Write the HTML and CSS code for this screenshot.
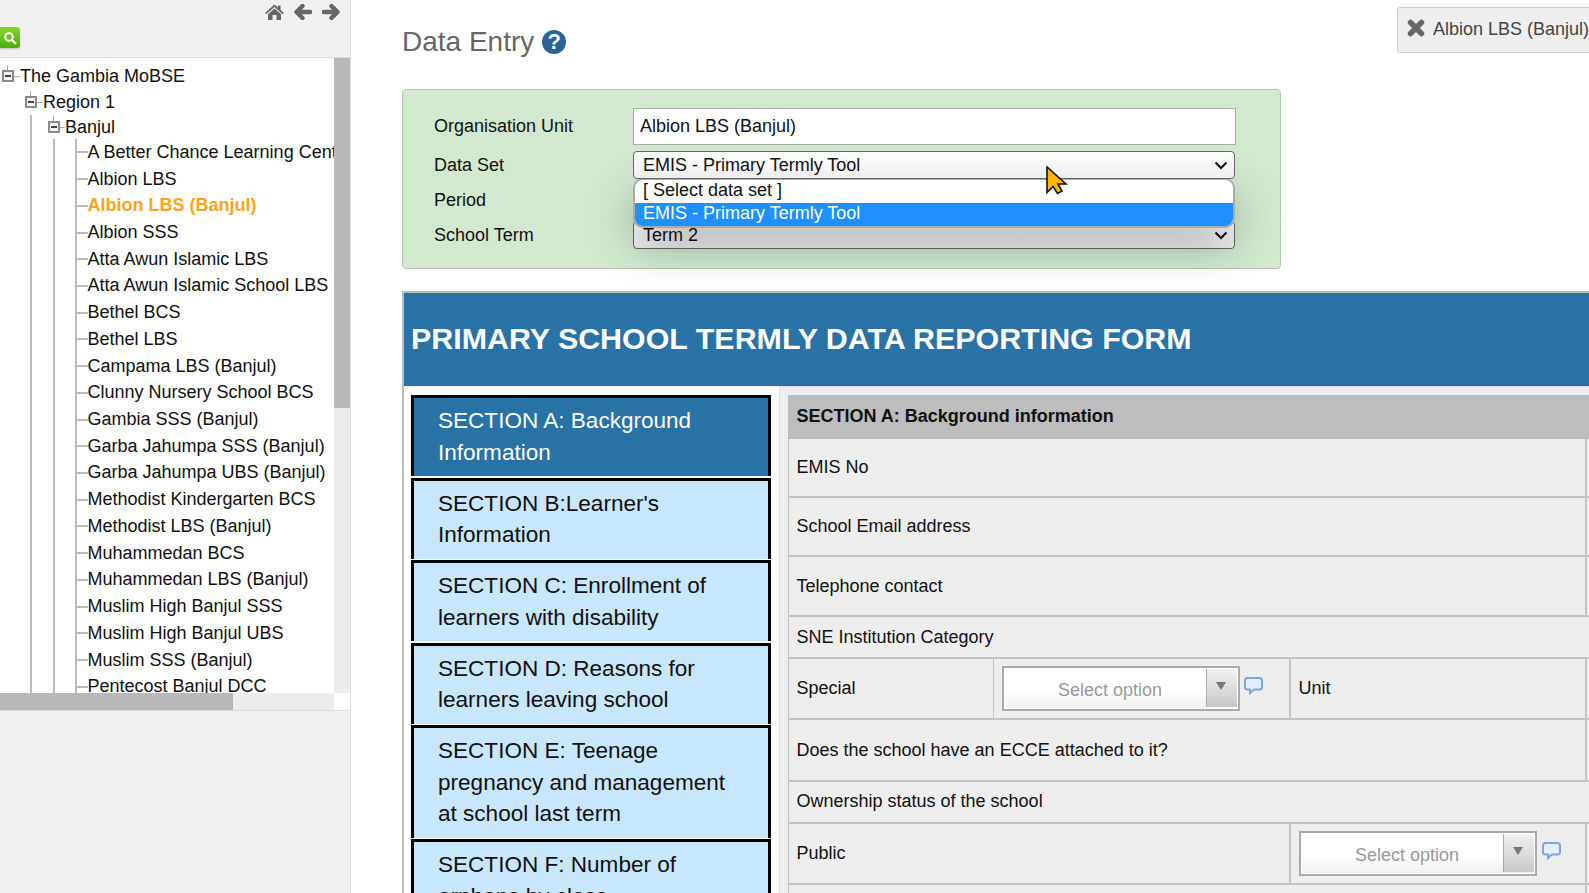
FILE: index.html
```html
<!DOCTYPE html>
<html lang="en">
  <head>
    <meta charset="UTF-8" />
    <title>Data Entry</title>
    <link rel="stylesheet" href="styles.css">
  </head>
  <body>
    <div class="sidebar">
      <div class="toolbar">
        <div class="toolbar-icons">
          <svg class="tool-icon" width="19" height="16" viewBox="0 0 19 16"><path d="M9.5 0.5 L13 3.6 V1.5 H15.5 V5.8 L19 9 L17.8 10.3 L9.5 3 L1.2 10.3 L0 9 Z"/><path d="M9.5 4.4 L16 10 V16 H11.5 V11 H7.5 V16 H3 V10 Z"/></svg>
          <svg class="tool-icon arrow" width="18" height="16" viewBox="0 0 18 16"><path d="M8.5 2 L2.5 8 L8.5 14 M3 8 H16"/></svg>
          <svg class="tool-icon arrow" width="18" height="16" viewBox="0 0 18 16"><path d="M9.5 2 L15.5 8 L9.5 14 M15 8 H2"/></svg>
        </div>
        <div class="search-btn">
          <svg width="14" height="14" viewBox="0 0 14 14"><circle cx="6" cy="6" r="3.8" fill="none" stroke="#fff" stroke-width="2"/><path d="M9 9 L13 13" stroke="#fff" stroke-width="2.4"/></svg>
        </div>
      </div>

      <div class="tree-box">
        <div class="tree">
          <div class="node node-root"><span class="toggle"></span><span class="tick"></span>The Gambia MoBSE</div>
          <div class="level-1">
            <div class="node node-region"><span class="toggle"></span><span class="tick"></span>Region 1</div>
            <div class="level-2">
              <div class="node node-district"><span class="toggle"></span><span class="tick"></span>Banjul</div>
              <div class="level-3">
                <ul class="leaves">
                  <li><span class="tick long"></span>A Better Chance Learning Centre</li>
                  <li><span class="tick long"></span>Albion LBS</li>
                  <li class="selected"><span class="tick long"></span>Albion LBS (Banjul)</li>
                  <li><span class="tick long"></span>Albion SSS</li>
                  <li><span class="tick long"></span>Atta Awun Islamic LBS</li>
                  <li><span class="tick long"></span>Atta Awun Islamic School LBS</li>
                  <li><span class="tick long"></span>Bethel BCS</li>
                  <li><span class="tick long"></span>Bethel LBS</li>
                  <li><span class="tick long"></span>Campama LBS (Banjul)</li>
                  <li><span class="tick long"></span>Clunny Nursery School BCS</li>
                  <li><span class="tick long"></span>Gambia SSS (Banjul)</li>
                  <li><span class="tick long"></span>Garba Jahumpa SSS (Banjul)</li>
                  <li><span class="tick long"></span>Garba Jahumpa UBS (Banjul)</li>
                  <li><span class="tick long"></span>Methodist Kindergarten BCS</li>
                  <li><span class="tick long"></span>Methodist LBS (Banjul)</li>
                  <li><span class="tick long"></span>Muhammedan BCS</li>
                  <li><span class="tick long"></span>Muhammedan LBS (Banjul)</li>
                  <li><span class="tick long"></span>Muslim High Banjul SSS</li>
                  <li><span class="tick long"></span>Muslim High Banjul UBS</li>
                  <li><span class="tick long"></span>Muslim SSS (Banjul)</li>
                  <li><span class="tick long"></span>Pentecost Banjul DCC</li>
                </ul>
              </div>
            </div>
          </div>
        </div>
        <div class="scroll-v"><div class="scroll-v-thumb"></div></div>
        <div class="scroll-h"><div class="scroll-h-thumb"></div></div>
        <div class="scroll-corner"></div>
      </div>
    </div>

    <div class="main">
      <div class="title-row">
        <h1>Data Entry <span class="help">?</span></h1>
        <div class="org-tag">
          <svg width="18" height="18" viewBox="0 0 18 18"><path d="M3.5 3.5 L14.5 14.5 M14.5 3.5 L3.5 14.5" stroke="#666" stroke-width="5.5" stroke-linecap="round"/></svg>
          <span class="org-tag-text">Albion LBS (Banjul)</span>
        </div>
      </div>

      <div class="criteria">
        <div class="criteria-row">
          <div class="criteria-label">Organisation Unit</div>
          <div class="org-input">Albion LBS (Banjul)</div>
        </div>
        <div class="criteria-row row-dataset">
          <div class="criteria-label">Data Set</div>
          <div class="picker picker-top">
            EMIS - Primary Termly Tool
            <svg class="chevron" width="14" height="9" viewBox="0 0 14 9"><path d="M1.5 1.5 L7 7 L12.5 1.5"/></svg>
          </div>
          <div class="popup">
            <div class="popup-item">[ Select data set ]</div>
            <div class="popup-item active">EMIS - Primary Termly Tool</div>
          </div>
        </div>
        <div class="criteria-row row-period">
          <div class="criteria-label">Period</div>
          <div class="picker"></div>
        </div>
        <div class="criteria-row">
          <div class="criteria-label">School Term</div>
          <div class="picker">
            Term 2
            <svg class="chevron" width="14" height="9" viewBox="0 0 14 9"><path d="M1.5 1.5 L7 7 L12.5 1.5"/></svg>
          </div>
        </div>
      </div>

      <div class="form">
        <div class="form-head">PRIMARY SCHOOL TERMLY DATA REPORTING FORM</div>
        <div class="form-body">
          <div class="sections">
            <div class="section active">SECTION A: Background Information</div>
            <div class="section">SECTION B:Learner's Information</div>
            <div class="section">SECTION C: Enrollment of learners with disability</div>
            <div class="section">SECTION D: Reasons for learners leaving school</div>
            <div class="section">SECTION E: Teenage pregnancy and management at school last term</div>
            <div class="section">SECTION F: Number of orphans by class</div>
          </div>
          <div class="sheet">
            <div class="sheet-title">SECTION A: Background information</div>
            <div class="sheet-row h59"><div class="cell span-3 edge">EMIS No</div></div>
            <div class="sheet-row h59"><div class="cell span-3 edge">School Email address</div></div>
            <div class="sheet-row h60"><div class="cell span-3 edge">Telephone contact</div></div>
            <div class="sheet-row h42"><div class="cell span-3">SNE Institution Category</div></div>
            <div class="sheet-row h61">
              <div class="cell col-a">Special</div>
              <div class="cell col-b">
                <div class="combo"><span class="combo-text">Select option</span><span class="combo-btn"><span class="combo-arrow"></span></span></div>
                <svg class="comment" width="19" height="18" viewBox="0 0 19 18"><path d="M3.5 1 H15.5 Q18 1 18 3.5 V10 Q18 12.5 15.5 12.5 H10 L6 16 V12.5 H3.5 Q1 12.5 1 10 V3.5 Q1 1 3.5 1 Z"/></svg>
              </div>
              <div class="cell col-c edge">Unit</div>
            </div>
            <div class="sheet-row h62"><div class="cell span-3 edge">Does the school have an ECCE attached to it?</div></div>
            <div class="sheet-row h42"><div class="cell span-3 tight">Ownership status of the school</div></div>
            <div class="sheet-row h61">
              <div class="cell col-ab">Public</div>
              <div class="cell col-c edge combo-cell">
                <div class="combo"><span class="combo-text">Select option</span><span class="combo-btn"><span class="combo-arrow"></span></span></div>
                <svg class="comment" width="19" height="18" viewBox="0 0 19 18"><path d="M3.5 1 H15.5 Q18 1 18 3.5 V10 Q18 12.5 15.5 12.5 H10 L6 16 V12.5 H3.5 Q1 12.5 1 10 V3.5 Q1 1 3.5 1 Z"/></svg>
              </div>
            </div>
            <div class="sheet-row h42"><div class="cell span-3 edge"></div></div>
          </div>
        </div>
      </div>
    </div>

    <svg class="cursor" width="22" height="29" viewBox="0 0 22 29"><path d="M1 1 V26.5 L7 20.5 L11.5 27.5 L16 25 L12 18 H20 Z"/></svg>
  </body>
</html>
```

FILE: styles.css
```css
* {
  box-sizing: border-box;
}

html,
body {
  margin: 0;
  height: 893px;
  overflow: hidden;
}

body {
  display: flex;
  font-family: "Liberation Sans", Arial, sans-serif;
  font-size: 18px;
  color: #111;
  background-color: #fff;
}

/* left tree panel */
.sidebar {
  flex: none;
  width: 351px;
  height: 893px;
  background-color: #f1f1f1;
  border-right: 1px solid #ddd;
}

.toolbar {
  height: 58px;
  border-bottom: 1px solid #ddd;
}

.toolbar-icons {
  display: flex;
  justify-content: flex-end;
  align-items: center;
  gap: 10px;
  height: 27px;
  padding-right: 10px;
  padding-bottom: 3px;
}

.tool-icon {
  fill: #666;
}

.tool-icon.arrow {
  fill: none;
  stroke: #666;
  stroke-width: 4.4;
  stroke-linecap: round;
  stroke-linejoin: round;
}

.search-btn {
  display: flex;
  align-items: center;
  justify-content: center;
  width: 20px;
  height: 21px;
  background: linear-gradient(#8ad62c, #4cae0c);
  border-radius: 0 3px 3px 0;
  box-shadow: 0 1px 2px rgba(0, 0, 0, 0.2);
}

.tree-box {
  display: grid;
  grid-template-columns: 334px 16px;
  grid-template-rows: 635px 17px;
  border-bottom: 1px solid #ddd;
}

.tree {
  padding-top: 5px;
  overflow: hidden;
  background-color: #fff;
  white-space: nowrap;
  line-height: 25px;
}

.node {
  display: flex;
  align-items: center;
}

.node-root {
  height: 26px;
  padding-left: 2px;
}

.node-region {
  height: 26px;
}

.node-district {
  height: 24px;
}

.node-district .tick {
  width: 5px;
}

.toggle {
  position: relative;
  flex: none;
  width: 12px;
  height: 12px;
  border: 2px solid #8a8a8a;
  background-color: #f2f2f2;
}

.toggle::before {
  content: "";
  position: absolute;
  left: 1px;
  top: 3px;
  width: 6px;
  height: 2px;
  background-color: #444;
}

.toggle::after {
  content: "";
  position: absolute;
  left: 3px;
  top: -7px;
  width: 1px;
  height: 5px;
  background-color: #aaa;
}

.tick {
  flex: none;
  width: 6px;
  height: 1px;
  background-color: #aaa;
}

.tick.long {
  width: 10.5px;
  height: 2px;
  background-color: #bbb;
}

.level-1 {
  margin-left: 25px;
}

.level-2 {
  margin-left: 5px;
  padding-left: 16px;
  border-left: 2px solid #bbb;
}

.level-3 {
  margin-left: 5px;
  padding-left: 20px;
  border-left: 2px solid #bbb;
}

.leaves {
  margin: 0;
  padding: 0;
  list-style: none;
  border-left: 2px solid #bbb;
}

.leaves li {
  display: flex;
  align-items: center;
  height: 26.72px;
}

.leaves li.selected {
  color: #ffa31a;
  font-weight: bold;
}

.scroll-v {
  background-color: #ededed;
}

.scroll-v-thumb {
  height: 350px;
  background-color: #b9b9b9;
}

.scroll-h {
  background-color: #ededed;
}

.scroll-h-thumb {
  width: 233px;
  height: 100%;
  background-color: #b9b9b9;
}

.scroll-corner {
  background-color: #fff;
}

/* main area */
.main {
  flex: none;
  width: 1238px;
  height: 893px;
  padding-left: 51px;
  overflow: hidden;
}

.title-row {
  display: flex;
  justify-content: space-between;
  align-items: flex-start;
  height: 89px;
  padding-top: 7px;
}

h1 {
  display: flex;
  align-items: center;
  gap: 8px;
  margin: 18px 0 0 0;
  font-size: 28px;
  font-weight: normal;
  line-height: 34px;
  color: #666;
}

.help {
  display: flex;
  align-items: center;
  justify-content: center;
  width: 24px;
  height: 24px;
  border-radius: 50%;
  background-color: #2a6496;
  color: #fff;
  font-size: 22px;
  font-weight: bold;
}

.org-tag {
  flex: none;
  display: flex;
  align-items: center;
  gap: 8px;
  height: 46px;
  margin-right: -13px;
  padding: 0 12px 2px 9px;
  background-color: #efefef;
  border: 1px solid #ccc;
  border-radius: 3px;
  color: #444;
}

.org-tag svg {
  margin-top: -2px;
}

.criteria {
  width: 879px;
  height: 180px;
  padding: 18px 0 0 31px;
  background-color: #d2e9d0;
  border: 1px solid #a9d0a5;
  border-radius: 4px;
}

.criteria-row {
  display: flex;
  align-items: center;
  margin-bottom: 6px;
}

.criteria-label {
  width: 199px;
}

.org-input {
  width: 603px;
  height: 37px;
  padding-left: 6px;
  line-height: 35px;
  background-color: #fff;
  border: 1px solid #aaa;
}

.picker {
  position: relative;
  display: flex;
  justify-content: space-between;
  align-items: center;
  width: 602px;
  height: 28px;
  padding: 0 6px 0 9px;
  background: linear-gradient(#fff, #eee);
  border: 1px solid #666;
  border-radius: 4px;
}

.row-dataset {
  position: relative;
}

.picker-top {
  z-index: 3;
}

.row-period {
  margin-top: 7px;
}

.row-period .picker {
  height: 29px;
}

.chevron {
  fill: none;
  stroke: #111;
  stroke-width: 2;
}

.popup {
  position: absolute;
  left: 201px;
  top: 29px;
  z-index: 2;
  width: 598px;
  height: 46px;
  background-color: #fff;
  border-radius: 8px;
  overflow: hidden;
  box-shadow: 0 0 0 2px #aaa, 0 16px 50px rgba(0, 0, 0, 0.32);
}

.popup-item {
  height: 23px;
  padding-left: 8px;
  line-height: 21px;
}

.popup-item.active {
  height: 23px;
  line-height: 20px;
  background-color: #1e90ff;
  color: #fff;
}

/* data entry form */
.form {
  position: relative;
  z-index: 3;
  width: 1187px;
  margin-top: 22px;
  border-top: 2px solid #bbb;
  border-left: 2px solid #bbb;
}

.form-head {
  display: flex;
  align-items: center;
  height: 93px;
  padding-left: 7px;
  padding-bottom: 2px;
  background-color: #2872a6;
  color: #fff;
  font-size: 30.4px;
  font-weight: bold;
}

.form-body {
  display: flex;
  height: 507px;
}

.sections {
  flex: none;
  width: 376px;
  padding: 8px 8px 0 7px;
  background-color: #fff;
  border-right: 1px solid #ddd;
  border-top: 1px solid #eee;
}

.section {
  margin-bottom: 1.6px;
  padding: 7px 36px 8px 24px;
  background-color: #c8e6fc;
  border: 3px solid #000;
  border-bottom: none;
  font-size: 22.55px;
  line-height: 31.5px;
}

.section.active {
  background-color: #2872a6;
  color: #fff;
}

.sheet {
  flex: 1;
  padding: 8px 0 0 8px;
  background-color: #eee;
  border-top: 1px solid #ddd;
}

.sheet-title {
  height: 44px;
  padding-left: 8.5px;
  line-height: 43px;
  background-color: #bdbdbd;
  font-weight: bold;
}

.sheet-row {
  display: flex;
  border-bottom: 2px solid #c4c4c4;
  border-left: 1px solid #c4c4c4;
}

.h59 {
  height: 59px;
}

.h60 {
  height: 60px;
}

.h61 {
  height: 61px;
}

.h62 {
  height: 62px;
}

.h42 {
  height: 42px;
}

.cell {
  display: flex;
  align-items: center;
  padding-left: 7.5px;
}

.tight {
  padding-bottom: 2px;
}

.span-3 {
  width: 798px;
}

.col-a {
  width: 205px;
  border-right: 1px solid #c4c4c4;
}

.col-b {
  width: 297px;
  border-right: 2px solid #c4c4c4;
  gap: 4px;
  padding-left: 8px;
}

.col-ab {
  width: 502px;
  border-right: 2px solid #c4c4c4;
}

.col-c {
  width: 296px;
}

.combo-cell {
  gap: 5px;
  padding-left: 8px;
}

.edge {
  border-right: 2px solid #c4c4c4;
}

.combo {
  flex: none;
  display: flex;
  width: 238px;
  height: 45px;
  background: linear-gradient(#fff 55%, #f0f0f0);
  border: 2px solid #aaa;
  box-shadow: inset 0 0 0 1px #fff;
}

.combo-text {
  flex: 1;
  padding-left: 10px;
  line-height: 44px;
  text-align: center;
  color: #999;
}

.combo-btn {
  display: flex;
  align-items: center;
  justify-content: center;
  width: 31px;
  margin: 1px 1px 2px 0;
  padding-bottom: 4px;
  padding-right: 2px;
  background: linear-gradient(#f2f2f2, #c8c8c8);
  border-left: 1px solid #aaa;
}

.combo-arrow {
  width: 0;
  height: 0;
  border-left: 5px solid transparent;
  border-right: 5px solid transparent;
  border-top: 8px solid #777;
}

.comment {
  flex: none;
  margin-top: -5px;
  fill: #e4eefc;
  stroke: #7ba7da;
  stroke-width: 2;
}

/* mouse pointer in the screen capture */
.cursor {
  position: absolute;
  left: 1046px;
  top: 166px;
  z-index: 5;
  fill: #fdb700;
  stroke: #111;
  stroke-width: 1.6;
}
```
